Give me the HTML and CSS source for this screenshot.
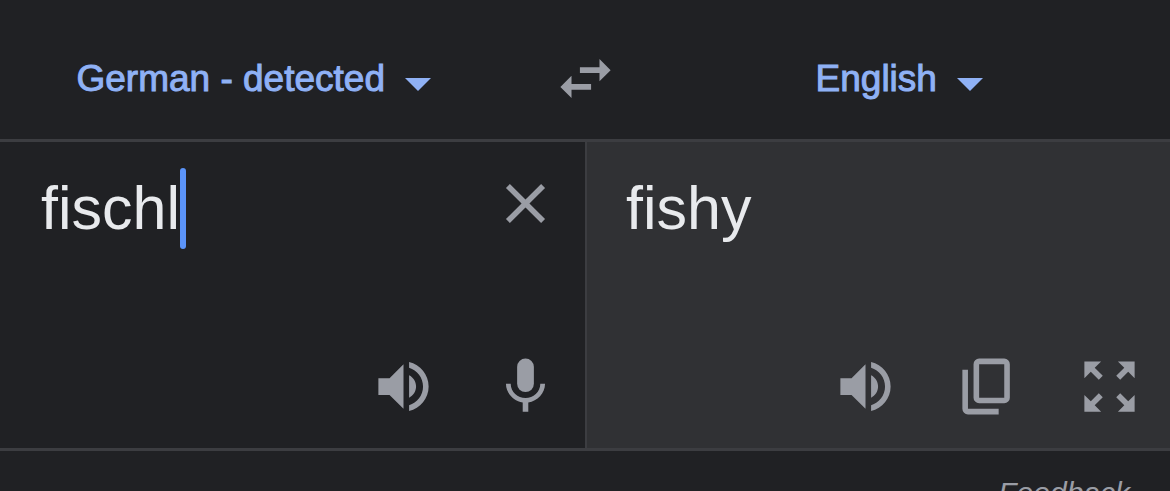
FILE: index.html
```html
<!DOCTYPE html>
<html lang="en">
<head>
<meta charset="utf-8">
<meta name="viewport" content="width=device-width, initial-scale=1">
<title>Translate</title>
<link rel="stylesheet" href="styles.css">
</head>
<body>
<svg class="sprite" aria-hidden="true">
  <symbol id="speaker" viewBox="0 0 24 24"><path d="M3 9v6h4l5 5V4L7 9H3zm13.500 3c0-1.770-1.020-3.290-2.500-4.030v8.050c1.480-.73 2.500-2.250 2.500-4.020zM14 3.230v2.060c2.890.86 5 3.540 5 6.710s-2.110 5.850-5 6.710v2.060c4.010-.91 7-4.490 7-8.770s-2.990-7.860-7-8.770z"/></symbol>
</svg>
<main class="translator">
  <header class="languages">
    <div class="side side-source">
      <button class="language" type="button">German - detected
        <svg class="arrow" viewBox="0 0 26 13" aria-hidden="true"><path d="M0 0h26L13 13z"/></svg>
      </button>
    </div>
    <button class="icon-button" type="button" aria-label="Swap languages">
      <svg class="icon" viewBox="0 0 24 24"><path d="M6.990 11L3 15l3.990 4v-3H14v-2H6.990v-3zM21 9l-3.990-4v3H10v2h7.010v3L21 9z"/></svg>
    </button>
    <div class="side side-target">
      <button class="language" type="button">English
        <svg class="arrow" viewBox="0 0 26 13" aria-hidden="true"><path d="M0 0h26L13 13z"/></svg>
      </button>
    </div>
  </header>
  <div class="panels">
    <section class="panel source">
      <div class="row">
        <div class="entry">
          <input class="text field" type="text" value="fischl" size="5" aria-label="Source text" spellcheck="false">
          <span class="caret"></span>
        </div>
        <button class="icon-button" type="button" aria-label="Clear text">
          <svg class="icon" viewBox="0 0 24 24"><path d="M19 6.410L17.590 5 12 10.590 6.410 5 5 6.410 10.590 12 5 17.590 6.410 19 12 13.410 17.590 19 19 17.590 13.410 12z"/></svg>
        </button>
      </div>
      <div class="actions">
        <button class="icon-button" type="button" aria-label="Listen to source">
          <svg class="icon"><use href="#speaker"/></svg>
        </button>
        <button class="icon-button" type="button" aria-label="Speak">
          <svg class="icon" viewBox="0 0 24 24"><rect x="9" y="2" width="6" height="12" rx="3"/><path d="M17.300 11c0 3-2.540 5.100-5.300 5.100S6.700 14 6.700 11H5c0 3.410 2.720 6.230 6 6.720V21h2v-3.280c3.280-.49 6-3.310 6-6.720h-1.700z"/></svg>
        </button>
      </div>
    </section>
    <section class="panel target">
      <div class="row">
        <div class="text">fishy</div>
      </div>
      <div class="actions">
        <button class="icon-button" type="button" aria-label="Listen to translation">
          <svg class="icon"><use href="#speaker"/></svg>
        </button>
        <button class="icon-button" type="button" aria-label="Copy translation">
          <svg class="icon" viewBox="0 0 24 24"><path fill-rule="evenodd" d="M9 2h9a2 2 0 0 1 2 2v12a2 2 0 0 1-2 2H9a2 2 0 0 1-2-2V4a2 2 0 0 1 2-2zm0 2v12h9V4H9zM3 6h2v14h11v2H5a2 2 0 0 1-2-2V6z"/></svg>
        </button>
        <button class="icon-button" type="button" aria-label="Full screen">
          <svg class="icon" viewBox="0 0 24 24"><path d="M3 3h6L6.700 5.300l2.890 2.870-1.420 1.420L5.300 6.700 3 9zM15 3h6v6l-2.300-2.300-2.870 2.890-1.420-1.420L17.300 5.300zM3 15l2.300 2.300 2.870-2.890 1.420 1.420L6.700 18.700 9 21H3zM21 15v6h-6l2.300-2.300-2.890-2.870 1.420-1.420 2.870 2.890z"/></svg>
        </button>
      </div>
    </section>
  </div>
  <footer class="footer"><a class="feedback" href="#feedback">Feedback</a></footer>
</main>
</body>
</html>
```
FILE: styles.css
```css
* {
  box-sizing: border-box;
}

body {
  margin: 0;
  overflow: hidden;
  background: #202124;
  color: #e8eaed;
  font-family: "Liberation Sans", Arial, sans-serif;
}

.sprite {
  display: none;
}

button {
  padding: 0;
  border: 0;
  background: none;
  font: inherit;
  cursor: pointer;
}

.languages {
  display: grid;
  grid-template-columns: 1fr auto 1fr;
  align-items: center;
  padding: 45px 0 27px;
  border-bottom: 3px solid #3c3d41;
}

.side {
  display: flex;
  justify-content: center;
}

.side-source {
  padding-right: 44px;
}

.side-target {
  padding-left: 10px;
}

.language {
  display: flex;
  align-items: center;
  gap: 20px;
  color: #8fb1f5;
  font-size: 37px;
  line-height: 48px;
  white-space: nowrap;
  -webkit-text-stroke: 1px currentColor;
}

.arrow {
  width: 26px;
  height: 13px;
  margin-top: 11px;
  fill: currentColor;
  stroke: none;
}

.icon-button {
  display: flex;
  flex: none;
  color: #9a9da5;
}

.icon {
  width: 67px;
  height: 67px;
  fill: currentColor;
}

.panels {
  display: grid;
  grid-template-columns: 1fr 1fr;
  border-bottom: 3px solid #3c3d41;
}

.panel {
  display: flex;
  flex-direction: column;
  justify-content: space-between;
  gap: 104px;
  padding: 26px 26px 28px 41px;
}

.target {
  padding-right: 27px;
  padding-left: 39px;
  border-left: 2px solid #3c3d41;
  background: #303134;
}

.row {
  display: flex;
  justify-content: space-between;
}

.row .icon-button {
  align-self: flex-start;
  margin-top: 2px;
}

.entry {
  display: flex;
}

.text {
  font-size: 61px;
  line-height: 81px;
}

.field {
  field-sizing: content;
  padding: 0;
  border: 0;
  outline: 0;
  background: none;
  color: inherit;
  font-family: inherit;
}

.caret {
  width: 6px;
  border-radius: 3px;
  background: #5b94f9;
}

.actions {
  display: flex;
  justify-content: flex-end;
  gap: 55px;
}

.footer {
  display: flex;
  justify-content: flex-end;
  padding: 24px 40px;
}

.feedback {
  color: #9a9da5;
  font-size: 30px;
  font-style: italic;
  line-height: 36px;
  text-decoration: none;
}
```
